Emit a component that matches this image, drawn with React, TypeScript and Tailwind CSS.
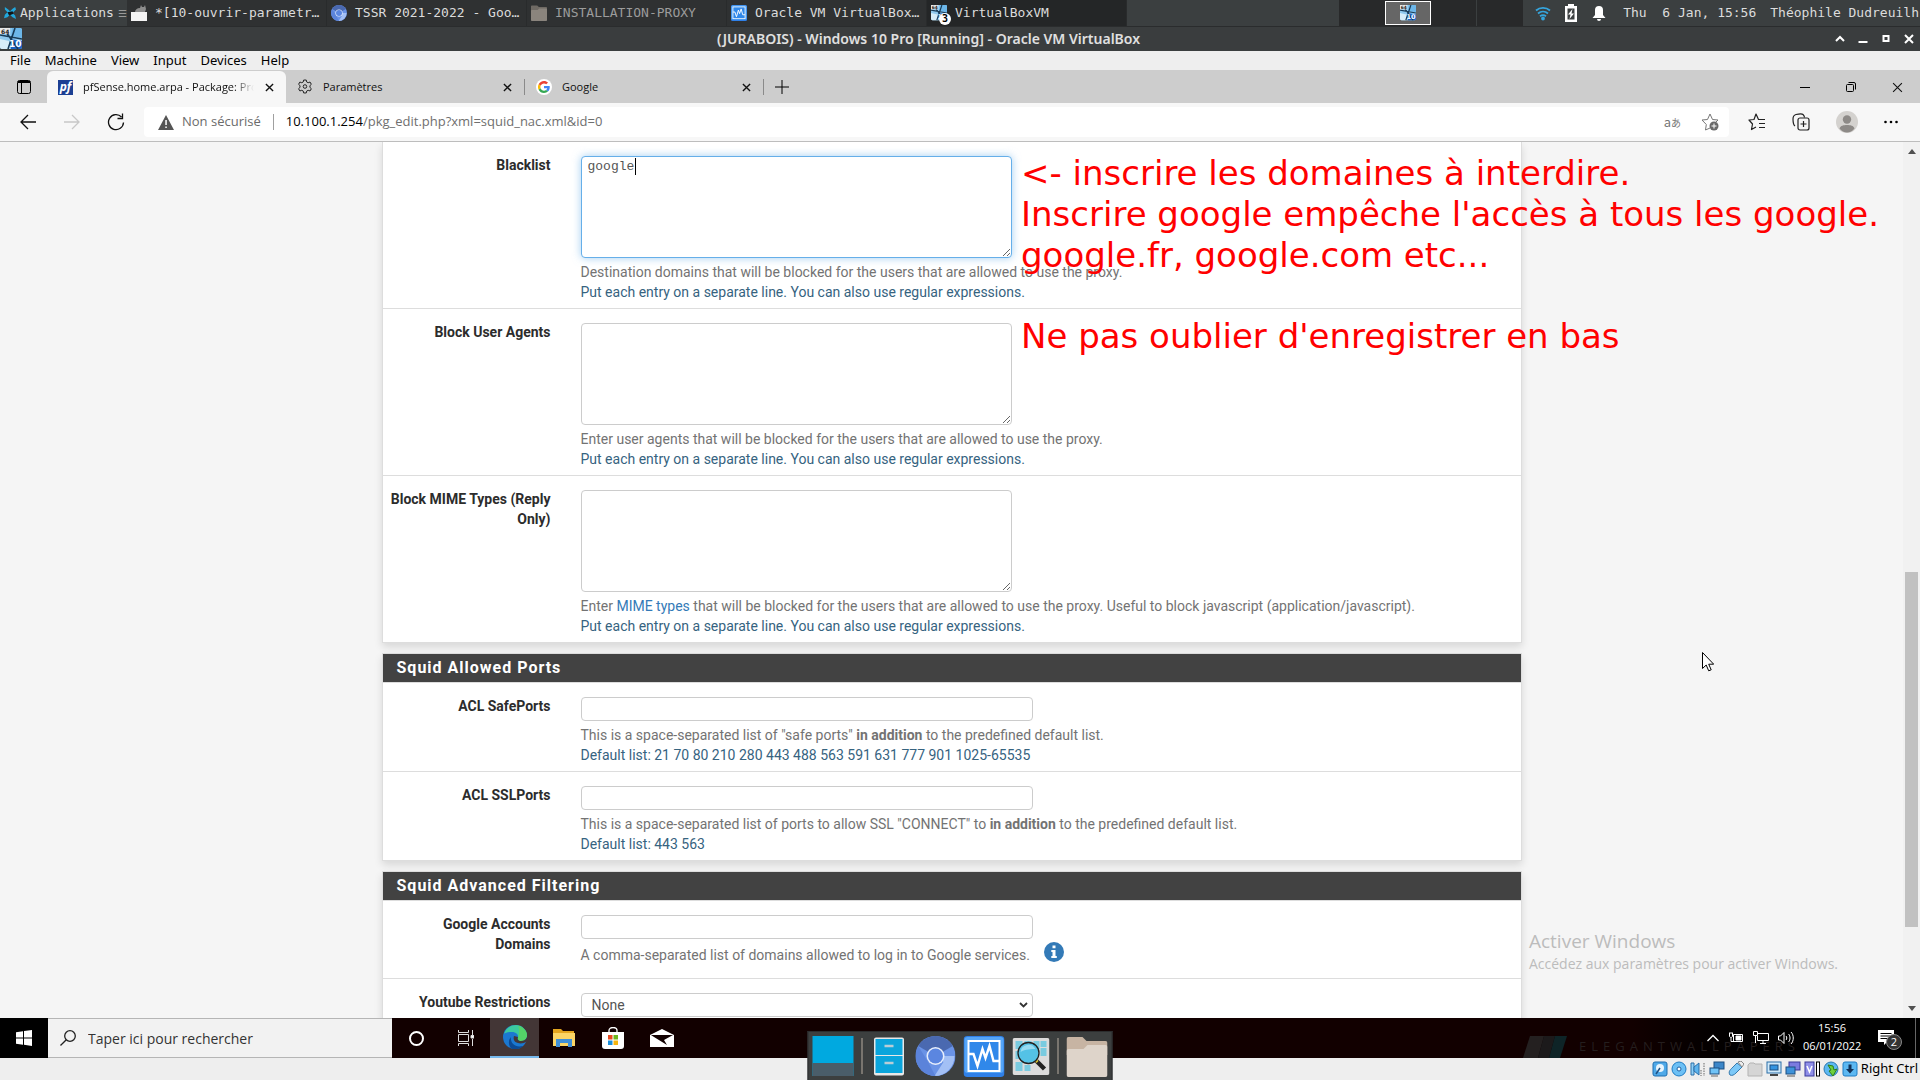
import React from 'react';
import clsx from 'clsx';

type IconProps = { className?: string };

interface RowProps {
  id: string;
  label: string;
  last?: boolean;
  children: React.ReactNode;
}

function Vm64Icon({ className }: IconProps) {
  return (
    <svg className={className} viewBox="0 0 22 22">
      <rect x="0" y="0" width="22" height="21" rx="2" fill="#8fc9ee" />
      <path d="M12 0h8a2 2 0 0 1 2 2v8l-11-2z" fill="#6cb6e8" />
      <path d="M0 11l9 2 1 8H2a2 2 0 0 1-2-2z" fill="#d6edf9" />
      <path d="M10 11l12 2v6a2 2 0 0 1-2 2h-9z" fill="#1b62c4" />
      <path d="M15 0L8 21M0 7l22 4M6 4l12 17" stroke="#173a56" strokeWidth="1.6" fill="none" />
      <rect x="0" y="0" width="10" height="6" fill="#e8e8e8" />
      <text x="1" y="6" fontSize="6" fontWeight="700" fontFamily="DejaVu Sans" fill="#222">64</text>
      <text x="9" y="19" fontSize="9" fontWeight="700" fontFamily="DejaVu Sans" fill="#fff">10</text>
    </svg>
  );
}

function ChromiumIcon({ className }: IconProps) {
  return (
    <svg className={className} viewBox="0 0 40 40">
      <circle cx="20" cy="20" r="20" fill="#6a93e6" />
      <path d="M20 20L2.700 10A20 20 0 0 1 37.300 10z" fill="#4a69b0" />
      <path d="M20 20h19a20 20 0 0 1-20 20l9-14z" fill="#a3c0f5" />
      <path d="M2.700 10L12 25l8 15A20 20 0 0 1 2.700 10z" fill="#5b83da" />
      <circle cx="20" cy="20" r="9" fill="#e8effc" />
      <circle cx="20" cy="20" r="7.500" fill="#5b86e0" />
    </svg>
  );
}

function VirtualBoxIcon({ className }: IconProps) {
  return (
    <svg className={className} viewBox="0 0 41 41">
      <rect width="41" height="41" rx="4" fill="#2f80e8" />
      <rect x="1" y="1" width="39" height="36" rx="3" fill="#55a5f7" />
      <rect x="4" y="4" width="33" height="32" fill="#fff" />
      <rect x="6" y="6" width="29" height="28" fill="#3088ea" />
      <path d="M5 18h5l4 12 5-17 3 9 4-12 4 15h6" fill="none" stroke="#fff" strokeWidth="2.400" />
    </svg>
  );
}

function FolderIcon({ className, dim }: IconProps & { dim?: boolean }) {
  return (
    <svg className={className} viewBox="0 0 41 41">
      <path d="M2 1h14l4 4h19a2 2 0 0 1 2 2v12H0V3a2 2 0 0 1 2-2z" fill={dim ? '#6f6a64' : '#c7b4a3'} />
      <path d="M0 15a2 2 0 0 1 2-2h15l4-4h18a2 2 0 0 1 2 2v28a2 2 0 0 1-2 2H2a2 2 0 0 1-2-2z" fill={dim ? '#8a847d' : '#ded4ca'} />
    </svg>
  );
}

function CloseIcon({ className }: IconProps) {
  return (
    <svg className={className} viewBox="0 0 10 10" stroke="currentColor" fill="none">
      <path d="M1 1l8 8M9 1L1 9" />
    </svg>
  );
}

function GoogleIcon() {
  return (
    <span className="flex h-4 w-4 items-center justify-center rounded-full bg-white">
      <svg className="h-3 w-3" viewBox="0 0 48 48">
        <path fill="#ea4335" d="M24 9.500c3.500 0 6.700 1.200 9.200 3.600l6.900-6.900C35.900 2.400 30.500 0 24 0 14.600 0 6.500 5.400 2.600 13.200l8 6.200C12.400 13.700 17.700 9.500 24 9.500z" />
        <path fill="#4285f4" d="M47 24.500c0-1.600-.2-3.100-.4-4.500H24v9h12.900c-.6 3-2.200 5.500-4.700 7.200l7.700 6C44.400 38 47 31.800 47 24.500z" />
        <path fill="#fbbc05" d="M10.500 28.600a14.500 14.500 0 0 1 0-9.200l-8-6.200a24 24 0 0 0 0 21.600z" />
        <path fill="#34a853" d="M24 48c6.500 0 11.900-2.100 15.900-5.800l-7.700-6c-2.200 1.500-4.900 2.300-8.200 2.300-6.300 0-11.600-4.200-13.500-9.900l-8 6.200C6.500 42.600 14.600 48 24 48z" />
      </svg>
    </span>
  );
}

/* ---------- Host desktop: panel and window title ---------- */

const hostTasks = [
  {
    label: '*[10-ouvrir-parametr…',
    icon: (
      <svg className="h-4 w-4" viewBox="0 0 16 16">
        <path d="M0 7h16v9H0z" fill="#f4f4f4" />
        <path d="M4 7c0-2 2-4 5-4l1-3 1 2h2l1-2 1 4-1 3z" fill="#8d8d8d" />
      </svg>
    ),
  },
  { label: 'TSSR 2021-2022 - Goo…', icon: <ChromiumIcon className="h-4 w-4" /> },
  { label: 'INSTALLATION-PROXY', icon: <FolderIcon className="h-4 w-4" dim />, dim: true },
  { label: 'Oracle VM VirtualBox…', icon: <VirtualBoxIcon className="h-4 w-4" /> },
  {
    label: 'VirtualBoxVM',
    active: true,
    icon: (
      <span className="relative">
        <Vm64Icon className="h-4 w-4" />
        <span className="absolute -right-1 -bottom-1 flex h-3 w-3 items-center justify-center rounded-full bg-white text-[10px] leading-3 font-bold text-black">
          3
        </span>
      </span>
    ),
  },
];

function HostPanel() {
  return (
    <header className="flex h-[27px] shrink-0 items-stretch border-b border-[#2a2c2d] bg-[#3b3f40] font-['DejaVu_Sans_Mono',monospace] text-[13px] text-[#dcdcdc]">
      <button className="flex w-[127px] items-center gap-1 pl-1 text-left">
        <svg className="h-4 w-3 shrink-0" viewBox="0 0 14 16">
          <path d="M1 1l4 3 2 2 3-3 3-2 1 3-4 4 3 3 1 4-4-2-3-3-3 3-4 1 1-4 3-3-3-3z" fill="#22a7dc" />
          <path d="M4 7l6-1 1 3-5 2z" fill="#101416" />
        </svg>
        <span>Applications</span>
        <span className="ml-auto pr-1 text-[10px] text-[#9a9a9a]">☰</span>
      </button>
      <nav className="flex bg-[#2f3132]">
        {hostTasks.map((task) => (
          <button
            key={task.label}
            className={clsx(
              'flex w-[200px] items-center gap-2 border-r border-[#292b2c] pl-1 text-left whitespace-nowrap',
              task.active && 'bg-[#242627]',
              task.dim && 'text-[#9c9c9c]'
            )}
          >
            {task.icon}
            <span>{task.label}</span>
          </button>
        ))}
      </nav>
      <div className="ml-auto flex items-stretch">
        <div className="flex bg-[#28292a]">
          <span className="w-[46px]" />
          <button aria-label="Workspace 2" className="my-px flex w-[46px] items-center justify-center border border-white bg-[#666]">
            <Vm64Icon className="h-4 w-4" />
          </button>
          <span className="w-[46px] border-r border-[#3b3f40]" />
          <span className="w-[46px]" />
        </div>
        <div className="flex items-center gap-3 pr-px pl-3">
          <svg className="h-4 w-4" viewBox="0 0 16 16" fill="none" stroke="#35a5dd" strokeWidth="1.800">
            <path d="M1 5.500c4-3.500 10-3.500 14 0M3 8.500c3-2.600 7-2.600 10 0M5 11.300c2-1.600 4-1.600 6 0" />
            <circle cx="8" cy="13.500" r="1" fill="#35a5dd" />
          </svg>
          <svg className="h-[18px] w-4" viewBox="0 0 16 18">
            <path d="M5 0h6v2h3v16H2V2h3z" fill="#fff" />
            <path d="M4.500 4.500h7v11h-7z" fill="#3b3f40" />
            <path d="M9.500 5L5 10.500h2.500L6.500 15l4.500-5.500H8.500z" fill="#fff" />
          </svg>
          <svg className="h-4 w-4" viewBox="0 0 16 16" fill="#fff">
            <path d="M8 1a4 4 0 0 1 4 4v5l2.500 3h-13L4 10V5a4 4 0 0 1 4-4zM6 14h4a2 2 0 0 1-4 0z" />
          </svg>
          <span className="pr-[2px] pl-1 whitespace-pre">Thu  6 Jan, 15:56</span>
          <span>Théophile Dudreuilh</span>
        </div>
      </div>
    </header>
  );
}

function VmTitleBar() {
  return (
    <div className="flex h-6 shrink-0 items-center bg-[#3a3d3e] text-white">
      <Vm64Icon className="h-[22px] w-[22px]" />
      <h1 className="flex-1 pb-px text-center font-['Noto_Sans',sans-serif] text-[14px] leading-5 font-semibold text-[#e0e0e0]">
        (JURABOIS) - Windows 10 Pro [Running] - Oracle VM VirtualBox
      </h1>
      <div className="flex items-center gap-[13px] pr-[6px]">
        <button aria-label="Shade">
          <svg className="block h-[10px] w-[10px]" viewBox="0 0 10 10" fill="none" stroke="#fff" strokeWidth="2">
            <path d="M1 7l4-4 4 4" />
          </svg>
        </button>
        <button aria-label="Minimize">
          <svg className="block h-[10px] w-[10px]" viewBox="0 0 10 10" fill="#fff">
            <path d="M0.500 7h9v2h-9z" />
          </svg>
        </button>
        <button aria-label="Maximize">
          <svg className="block h-[10px] w-[10px]" viewBox="0 0 10 10" fill="none" stroke="#fff" strokeWidth="2">
            <path d="M2.500 2h5v5h-5z" />
          </svg>
        </button>
        <button aria-label="Close">
          <CloseIcon className="block h-[10px] w-[10px] stroke-2" />
        </button>
      </div>
    </div>
  );
}

function VmMenu() {
  return (
    <nav className="flex h-[19px] shrink-0 items-start gap-[14px] bg-[#eeeeee] pl-[10px] font-['Noto_Sans',sans-serif] text-[13px] leading-[18px] text-black">
      {['File', 'Machine', 'View', 'Input', 'Devices', 'Help'].map((item) => (
        <button key={item}>{item}</button>
      ))}
    </nav>
  );
}

/* ---------- Browser chrome ---------- */

function Tab({ icon, title, active }: { icon: React.ReactNode; title: string; active?: boolean }) {
  return (
    <div
      className={clsx(
        'flex w-[239px] items-center gap-[10px] pl-[11px]',
        active ? 'rounded-t-md bg-[#f7f7f7]' : 'my-2 border-r border-[#8a8a8a]'
      )}
    >
      {icon}
      <span
        className={clsx(
          'w-[171px] overflow-hidden whitespace-nowrap',
          active && 'mask-r-from-88%'
        )}
      >
        {title}
      </span>
      <button aria-label="Fermer l'onglet" className="ml-auto pr-3">
        <CloseIcon className="block h-[9px] w-[9px] stroke-[1.5]" />
      </button>
    </div>
  );
}

function BrowserTabs() {
  return (
    <div className="flex h-[33px] shrink-0 items-stretch bg-[#cdcdcd] pt-px font-['Open_Sans',sans-serif] text-[11px] text-[#111]">
      <button aria-label="Onglets" className="flex w-[47px] items-center justify-center">
        <svg className="h-[14px] w-[14px]" viewBox="0 0 14 14" fill="none" stroke="#000">
          <rect x="0.500" y="0.500" width="13" height="13" rx="2" />
          <path d="M1 2.500h12M1 1.500h12M4.500 3v10" />
        </svg>
      </button>
      <Tab
        active
        title="pfSense.home.arpa - Package: Proxy"
        icon={
          <span className="flex h-[15px] w-[15px] items-center justify-center bg-[#1c3f93] text-[12px] leading-3 font-bold text-white italic">
            pf
          </span>
        }
      />
      <Tab
        title="Paramètres"
        icon={
          <svg className="h-4 w-4" viewBox="0 0 16 16" fill="none" stroke="#222" strokeLinejoin="round">
            <path d="M6.700 1h2.600l.4 1.900 1.500.8 1.900-.7 1.300 2.300-1.400 1.300v1.800l1.400 1.300-1.300 2.300-1.900-.7-1.500.8-.4 1.900H6.700l-.4-1.900-1.500-.8-1.900.7-1.300-2.300L3 8.400V6.600L1.600 5.300 2.900 3l1.900.7 1.500-.8z" />
            <circle cx="8" cy="7.500" r="1.800" />
          </svg>
        }
      />
      <Tab title="Google" icon={<GoogleIcon />} />
      <button aria-label="Nouvel onglet" className="flex w-9 items-center justify-center">
        <svg className="h-[14px] w-[14px]" viewBox="0 0 14 14" stroke="#000">
          <path d="M7 0v14M0 7h14" />
        </svg>
      </button>
      <div className="ml-auto flex items-center">
        <button aria-label="Réduire" className="flex w-[46px] justify-center">
          <svg className="h-[10px] w-[10px]" viewBox="0 0 10 10" stroke="#000"><path d="M0 5.500h10" /></svg>
        </button>
        <button aria-label="Restaurer" className="flex w-[46px] justify-center">
          <svg className="h-[10px] w-[10px]" viewBox="0 0 10 10" fill="none" stroke="#000">
            <rect x="0.500" y="2.500" width="7" height="7" rx="1" />
            <path d="M2.500.5H8A1.500 1.500 0 0 1 9.500 2v5.500" />
          </svg>
        </button>
        <button aria-label="Fermer" className="flex w-[46px] justify-center">
          <CloseIcon className="h-[11px] w-[11px]" />
        </button>
      </div>
    </div>
  );
}

function BrowserToolbar() {
  return (
    <div className="flex h-[39px] shrink-0 items-center border-b border-[#bdbdbd] bg-[#f7f7f7] pl-[6px] font-['Open_Sans',sans-serif] text-[13px]">
      <button aria-label="Retour" className="flex w-[44px] justify-center">
        <svg className="h-4 w-4" viewBox="0 0 16 16" fill="none" stroke="#111" strokeWidth="1.300">
          <path d="M16 8H1M8 1L1 8l7 7" />
        </svg>
      </button>
      <button aria-label="Avancer" className="flex w-[44px] justify-center">
        <svg className="h-4 w-4" viewBox="0 0 16 16" fill="none" stroke="#c8c8c8" strokeWidth="1.300">
          <path d="M0 8h15M8 1l7 7-7 7" />
        </svg>
      </button>
      <button aria-label="Actualiser" className="flex w-[44px] justify-center">
        <svg className="h-[18px] w-[18px]" viewBox="0 0 18 18" fill="none" stroke="#111" strokeWidth="1.300">
          <path d="M16.500 9.500A7.500 7.500 0 1 1 14.500 4M15.500 0.500v5h-5" />
        </svg>
      </button>
      <div className="ml-[6px] flex h-[30px] flex-1 items-center rounded bg-white pr-[10px] pl-[14px]">
        <svg className="mr-2 h-[15px] w-4 shrink-0" viewBox="0 0 16 15">
          <path d="M8 0l8 15H0z" fill="#555" />
          <path d="M7.300 5h1.500v5H7.300zM7.300 11.500h1.500v1.500H7.300z" fill="#fff" />
        </svg>
        <span className="text-[#6b6b6b]">Non sécurisé</span>
        <span className="mx-3 h-4 w-px bg-[#a0a0a0]" />
        <span className="flex-1 text-[#6f6f6f]">
          <span className="text-black">10.100.1.254</span>/pkg_edit.php?xml=squid_nac.xml&amp;id=0
        </span>
        <button aria-label="Traduire" className="mr-5 font-['Noto_Sans_CJK_JP',sans-serif] text-[13px] leading-4 text-[#777]">
          a<span className="text-[10px]">あ</span>
        </button>
        <button aria-label="Ajouter aux favoris">
          <svg className="block h-[18px] w-[18px]" viewBox="0 0 18 18" fill="none" stroke="#777" strokeLinejoin="round">
            <path d="M9 15l-4.500 2 .8-5.500L1 7l5.500-.5L9 1l2.500 5.500L17 7l-2 2" />
            <circle cx="13" cy="13" r="4.500" fill="#6a6a6a" stroke="none" />
            <path d="M13 10.500v5M10.500 13h5" stroke="#fff" />
          </svg>
        </button>
      </div>
      <div className="flex items-center gap-[26px] pr-[22px] pl-[19px]">
        <button aria-label="Favoris">
          <svg className="block h-[18px] w-[18px]" viewBox="0 0 18 18" fill="none" stroke="#222" strokeLinejoin="round" strokeWidth="1.200">
            <path d="M8 14l-4.500 2.500 1-5.500L1 7l5-.5L8 1l2.500 5.500M10 6.500h7M11 10.500h6M11 14.500h6" />
          </svg>
        </button>
        <button aria-label="Collections">
          <svg className="block h-[18px] w-[18px]" viewBox="0 0 18 18" fill="none" stroke="#222" strokeWidth="1.200">
            <rect x="6" y="5" width="11" height="12" rx="2" />
            <path d="M3 13C1.500 12 1 9 1 6s1-4 3-4.500 6-1 7 0 1.500 1.500 1.500 3M11.500 8v6M8.500 11h6" />
          </svg>
        </button>
        <button aria-label="Profil">
          <svg className="block h-[22px] w-[22px]" viewBox="0 0 22 22">
            <circle cx="11" cy="11" r="11" fill="#d4d2cf" />
            <circle cx="11" cy="8.500" r="4.200" fill="#8d8a87" />
            <path d="M3.500 17.500c1-3 4-3.500 7.500-3.500s6.500.5 7.500 3.500C16.500 20 14 21.500 11 21.500S5.500 20 3.500 17.500z" fill="#8d8a87" />
          </svg>
        </button>
        <button aria-label="Plus">
          <svg className="block h-[14px] w-[14px]" viewBox="0 0 14 14">
            <circle cx="1.500" cy="7" r="1.300" /><circle cx="7" cy="7" r="1.300" /><circle cx="12.500" cy="7" r="1.300" />
          </svg>
        </button>
      </div>
    </div>
  );
}

/* ---------- pfSense form ---------- */

function Row({ id, label, last, children }: RowProps) {
  return (
    <div className={clsx('grid grid-cols-[183px_1fr] pt-[14px] pb-[6px]', !last && 'border-b border-[#dddddd]')}>
      <label htmlFor={id} className="-mt-px pr-[15px] pl-1 text-right font-bold text-[#2c2c2c]">
        {label}
      </label>
      <div className="pl-[15px]">{children}</div>
    </div>
  );
}

function Help({ children, note }: { children: React.ReactNode; note?: string }) {
  return (
    <p className="mt-1 text-[#737373]">
      {children}
      {note && <span className="block text-[#36637f]">{note}</span>}
    </p>
  );
}

function Area({ id, focused, value }: { id: string; focused?: boolean; value?: string }) {
  return (
    <div className="relative w-[431px]">
      <textarea
        id={id}
        defaultValue={value}
        className={clsx(
          "block h-[102px] w-full rounded border bg-white px-[6px] py-px font-['Liberation_Mono',monospace] text-[13px] leading-[18px] text-[#555] outline-none",
          focused ? 'border-[#66afe9] shadow-[0_0_8px_rgba(102,175,233,0.6)]' : 'border-[#cccccc]'
        )}
      />
      {focused && <span className="absolute top-[2px] left-[54px] h-[17px] w-px bg-black" />}
    </div>
  );
}

function TextField({ id }: { id: string }) {
  return <input id={id} type="text" className="block h-6 w-[452px] rounded border border-[#cccccc] bg-white px-2" />;
}

function Panel({ title, children }: { title?: string; children: React.ReactNode }) {
  return (
    <section
      className={clsx(
        'mb-[10px] border border-[#dddddd] bg-white shadow-[0_4px_8px_rgba(0,0,0,0.12)]',
        !title && 'border-t-0'
      )}
    >
      {title && (
        <h2 className="h-[29px] border-b border-[#dddddd] bg-[#424242] pl-[14px] text-[16px] leading-[28px] font-bold tracking-[1px] text-white">
          {title}
        </h2>
      )}
      {children}
    </section>
  );
}

const separateLine = 'Put each entry on a separate line. You can also use regular expressions.';

function PfSensePage() {
  return (
    <main className="mx-auto w-full max-w-[1140px] font-[Roboto,sans-serif] text-[14px] leading-5">
      <Panel>
        <Row id="blacklist" label="Blacklist">
          <Area id="blacklist" value="google" focused />
          <Help note={separateLine}>
            Destination domains that will be blocked for the users that are allowed to use the proxy.
          </Help>
        </Row>
        <Row id="agents" label="Block User Agents">
          <Area id="agents" />
          <Help note={separateLine}>Enter user agents that will be blocked for the users that are allowed to use the proxy.</Help>
        </Row>
        <Row id="mime" label="Block MIME Types (Reply Only)" last>
          <Area id="mime" />
          <Help note={separateLine}>
            Enter <a href="#mime" className="text-[#337ab7]">MIME types</a> that will be blocked for the users that are
            allowed to use the proxy. Useful to block javascript (application/javascript).
          </Help>
        </Row>
      </Panel>

      <Panel title="Squid Allowed Ports">
        <Row id="safeports" label="ACL SafePorts">
          <TextField id="safeports" />
          <Help note="Default list: 21 70 80 210 280 443 488 563 591 631 777 901 1025-65535">
            This is a space-separated list of "safe ports" <b>in addition</b> to the predefined default list.
          </Help>
        </Row>
        <Row id="sslports" label="ACL SSLPorts" last>
          <TextField id="sslports" />
          <Help note="Default list: 443 563">
            This is a space-separated list of ports to allow SSL "CONNECT" to <b>in addition</b> to the predefined default
            list.
          </Help>
        </Row>
      </Panel>

      <Panel title="Squid Advanced Filtering">
        <Row id="accounts" label="Google Accounts Domains">
          <TextField id="accounts" />
          <div className="flex h-[33px] items-start gap-[14px] pt-[3px] text-[#737373]">
            <span className="pt-[3px]">A comma-separated list of domains allowed to log in to Google services.</span>
            <button aria-label="Info">
              <svg className="block h-5 w-5" viewBox="0 0 20 20">
                <circle cx="10" cy="10" r="10" fill="#337ab7" />
                <path d="M8.500 3.500h3v2.700h-3zM7.300 8h4.200v6h1.300v2H7.300v-2h1.200v-4H7.300z" fill="#fff" />
              </svg>
            </button>
          </div>
        </Row>
        <Row id="youtube" label="Youtube Restrictions" last>
          <div className="relative w-[452px]">
            <select id="youtube" className="block h-6 w-full appearance-none rounded border border-[#cccccc] bg-white pl-[10px] text-[#555]">
              <option>None</option>
            </select>
            <svg className="pointer-events-none absolute top-[9px] right-[5px] h-[6px] w-[9px]" viewBox="0 0 9 6" fill="none" stroke="#333" strokeWidth="1.800">
              <path d="M1 1l3.500 3.500L8 1" />
            </svg>
          </div>
        </Row>
      </Panel>
    </main>
  );
}

function Scrollbar() {
  return (
    <div className="flex w-[17px] shrink-0 flex-col items-center justify-between bg-[#f1f1f1] py-[7px]">
      <svg className="h-[5px] w-[8px]" viewBox="0 0 8 5" fill="#505050"><path d="M4 0l4 5H0z" /></svg>
      <div className="flex w-[13px] flex-1 flex-col">
        <span className="grow-[418]" />
        <span className="grow-[355] bg-[#c1c1c1]" />
        <span className="grow-[79]" />
      </div>
      <svg className="h-[5px] w-[8px]" viewBox="0 0 8 5" fill="#505050"><path d="M0 0h8L4 5z" /></svg>
    </div>
  );
}

/* ---------- Guest taskbar ---------- */

function Taskbar() {
  return (
    <footer className="relative flex h-10 shrink-0 items-stretch bg-linear-to-r from-[#120000] from-85% to-black to-95% font-['Open_Sans',sans-serif] text-white">
      <button aria-label="Démarrer" className="flex w-12 items-center justify-center bg-black">
        <svg className="h-4 w-4" viewBox="0 0 16 16" fill="#fff">
          <path d="M0 2.200L7 1.200v6.300H0zM8 1l8-1v7.500H8zM0 8.500h7v6.300l-7-1zM8 8.500h8V16l-8-1.200z" />
        </svg>
      </button>
      <label className="flex w-[344px] items-center gap-3 border-y border-[#b5b5b5] bg-[#f2f2f2] pl-3">
        <svg className="h-4 w-4" viewBox="0 0 16 16" fill="none" stroke="#222" strokeWidth="1.300">
          <circle cx="10" cy="6" r="5.300" />
          <path d="M6.300 9.700L0.500 15.500" />
        </svg>
        <input
          type="text"
          placeholder="Taper ici pour rechercher"
          className="w-64 bg-transparent text-[14px] outline-none placeholder:text-[#333]"
        />
      </label>
      <button aria-label="Cortana" className="flex w-[49px] items-center justify-center">
        <span className="h-[15px] w-[15px] rounded-full border-2 border-white" />
      </button>
      <button aria-label="Vue des tâches" className="flex w-[49px] items-center justify-center">
        <svg className="h-4 w-4" viewBox="0 0 16 16" fill="none" stroke="#ddd">
          <path d="M0.500 4.500h10v7h-10zM0.500 0v2.500h10V0M0.500 16v-2.500h10V16M14.500 0v5M14.500 9v7" />
          <path d="M13 5.500h3v2.500h-3z" fill="#fff" />
        </svg>
      </button>
      <button aria-label="Edge" className="flex w-[49px] items-center justify-center border-b-2 border-[#76b9ed] bg-[#433636]">
        <svg className="h-6 w-6" viewBox="0 0 24 24">
          <circle cx="12" cy="12" r="12" fill="#1b78d0" />
          <path d="M1 9C3 2 9 0 13 0c6 0 11 5 11 10 0 4-3 6-6 6-2 0-4-1-3-3 1-4-3-6-6-6-4 0-7 1-8 2z" fill="#3bc9a0" />
          <path d="M15 1c5 1 9 5 9 9 0 4-3 6-6 6-2 0-4-1-3-3 1-3 2-8 0-12z" fill="#5bd65a" opacity=".8" />
          <path d="M9 24C5 21 5 15 8 12c-1 6 4 11 12 9-3 3-7 4-11 3z" fill="#0c4a94" />
          <path d="M11 11c-1 3 0 6 4 7 3 1 6 0 8-1l1-1V12c-1 3-4 4-6 4-3 0-4-2-3-4z" fill="#433636" />
        </svg>
      </button>
      <button aria-label="Explorateur" className="flex w-[49px] items-center justify-center">
        <svg className="h-[18px] w-[22px]" viewBox="0 0 22 18">
          <path d="M0 0h8l2 2h11v15H0z" fill="#e3a51f" />
          <path d="M0 4h22v13H0z" fill="#fbd565" />
          <path d="M3 10h16v8h-4v-4H7v4H3z" fill="#3f8fd6" />
        </svg>
      </button>
      <button aria-label="Store" className="flex w-[49px] items-center justify-center">
        <svg className="h-[22px] w-[22px]" viewBox="0 0 22 22">
          <path d="M7 6V3.500C7 1.500 9 0.500 11 0.500s4 1 4 3V6" fill="none" stroke="#fff" strokeWidth="1.300" />
          <path d="M0 5h22v14a3 3 0 0 1-3 3H3a3 3 0 0 1-3-3z" fill="#fff" />
          <path d="M6 8h4.500v4.500H6z" fill="#e8491f" /><path d="M11.500 8H16v4.500h-4.500z" fill="#6fb61e" />
          <path d="M6 13.500h4.500V18H6z" fill="#1b8fdc" /><path d="M11.500 13.500H16V18h-4.500z" fill="#f6b40e" />
        </svg>
      </button>
      <button aria-label="Courrier" className="flex w-[49px] items-center justify-center">
        <svg className="h-[18px] w-6" viewBox="0 0 24 18">
          <path d="M0 6l12-6 12 6v12H0z" fill="#fff" />
          <path d="M1 6h22l-9 5 3 5L4 8z" fill="#120000" />
        </svg>
      </button>

      <div className="absolute right-[120px] bottom-0 flex h-[22px] items-center gap-3 text-[13px] tracking-[5px] text-[#241e1e]" aria-hidden>
        <svg className="h-[22px] w-11" viewBox="0 0 44 22">
          <path d="M7 0h14l-6 22H0z" fill="#242020" />
          <path d="M21 0h11l-6 22H15z" fill="#1c1a1b" />
          <path d="M32 0h12l-7 22H26z" fill="#0e2427" />
        </svg>
        ELEGANTWALLPAPERS
      </div>

      <div className="relative ml-auto flex items-center gap-[9px] pr-1">
        <svg className="h-2 w-3" viewBox="0 0 12 8" fill="none" stroke="#fff" strokeWidth="1.300"><path d="M0.500 7L6 1.500 11.500 7" /></svg>
        <svg className="h-4 w-4" viewBox="0 0 16 16" fill="none" stroke="#fff">
          <path d="M5.500 4.500h9v7h-9zM1 3h4M1.500 3v3c0 2 3 2 3 0V3M3 8v3.500h3" />
          <path d="M8 6h5v4H8z" fill="#fff" />
        </svg>
        <svg className="h-4 w-4" viewBox="0 0 16 16" fill="none" stroke="#fff">
          <path d="M5 3.500h10.500v7H4.500V6M7 13.500h6M10 11v2.500M0.500 1.500h4v4h-4zM2.500 6v7" />
        </svg>
        <svg className="h-4 w-4" viewBox="0 0 16 16" fill="none" stroke="#fff">
          <path d="M0.500 6h2L6 2.500v11L2.500 10h-2zM8 6c1 1 1 3 0 4M10.500 4c2 2 2 6 0 8M13 2c3 3 3 9 0 12" />
        </svg>
        <div className="w-[58px] pb-[2px] text-center text-[11px] leading-[18px]">
          <div>15:56</div>
          <div>06/01/2022</div>
        </div>
        <button aria-label="Notifications" className="relative mr-1 ml-2 block h-6 w-6">
          <svg className="h-[18px] w-4" viewBox="0 0 16 16">
            <path d="M0 0h16v12H9l-3 3v-3H0z" fill="#fff" />
            <path d="M2.500 3.500h11M2.500 6h11M2.500 8.500h7" stroke="#000" />
          </svg>
          <span className="absolute top-2 right-0 flex h-4 w-4 items-center justify-center rounded-full border border-[#888] bg-[#333] text-[11px] leading-3">
            2
          </span>
        </button>
        <span className="h-10 w-px bg-[#666]" />
      </div>
    </footer>
  );
}

/* ---------- VirtualBox status bar and dock ---------- */

const statusIcons = [
  <><rect x="1" y="1" width="14" height="14" rx="2" fill="#4fa9e8" stroke="#1f6fb0" /><circle cx="8" cy="7" r="4" fill="#e8f5fd" /><path d="M4 13l4-6" stroke="#1f4f80" strokeWidth="1.500" /></>,
  <><circle cx="8" cy="8" r="7" fill="#6cc0f5" stroke="#1f7cc4" /><circle cx="8" cy="8" r="2" fill="#fff" stroke="#1f5fa0" /></>,
  <><path d="M1 2h3v12H1z" fill="#8fd0f7" stroke="#2a6fa8" /><path d="M4 6l5-4v12L4 10z" fill="#5db4ee" stroke="#2a6fa8" /><path d="M11 9v6M14 2v13" stroke="#aaa" strokeWidth="2" strokeDasharray="1.500 1" /></>,
  <><rect x="5" y="1" width="10" height="7" fill="#3b86c8" stroke="#1d4f80" /><rect x="1" y="7" width="9" height="6" fill="#6fc3f7" stroke="#1d4f80" /><path d="M2 15h7" stroke="#666" /></>,
  <><path d="M2 14c-2-3 0-5 2-7l5-5 5 4-6 6c-2 2-4 3-6 2z" fill="#7cc8f7" stroke="#3579ad" /><path d="M10 1l3-1 3 3-2 3z" fill="#eee" stroke="#888" /></>,
  <path d="M1 4l2-2h4l1 1h7v12H1z" fill="#d5d5d5" stroke="#b3b3b3" />,
  <><rect x="1" y="1" width="14" height="11" fill="#cfe9fa" stroke="#2a6fa8" /><rect x="4" y="4" width="8" height="5" fill="#3494e0" stroke="#1d4f80" /><path d="M4 14h8" stroke="#444" strokeWidth="2" /></>,
  <><rect x="4" y="1" width="11" height="8" fill="#7b7be0" stroke="#3a3a9a" /><rect x="1" y="6" width="9" height="7" fill="#3f93da" stroke="#1d4f80" /><path d="M2 15h8" stroke="#555" /></>,
  <><rect x="1" y="1" width="9" height="14" fill="#8f8fe8" stroke="#3b3b9c" /><path d="M3 5l2.500 6L8 5" fill="none" stroke="#fff" strokeWidth="1.500" /><rect x="12.500" y="1" width="3" height="14" fill="#fff" stroke="#000" /></>,
  <><circle cx="8" cy="8" r="7" fill="#5cb8f2" stroke="#2a78b0" /><path d="M5 4l5 1 1 4 3-1-4 7-4-5 2-1z" fill="#6ed13c" stroke="#2e7d1a" /></>,
  <><rect x="1" y="1" width="14" height="14" rx="2" fill="#5cb8f2" stroke="#1f7cc4" /><path d="M6.500 3.500h3V8H12l-4 4.500L4 8h2.500z" fill="#12335a" /></>,
];

function StatusBar() {
  return (
    <div className="flex h-[22px] shrink-0 items-center justify-end gap-[3px] bg-[#eeeeee] pr-[2px] font-['Noto_Sans',sans-serif] text-[13px] text-black">
      {statusIcons.map((shape, i) => (
        <svg key={i} className="h-4 w-4" viewBox="0 0 16 16">{shape}</svg>
      ))}
      <span>Right Ctrl</span>
    </div>
  );
}

function Dock() {
  return (
    <nav className="absolute bottom-0 left-1/2 flex h-[49px] -translate-x-1/2 items-center gap-2 border border-b-0 border-[#2b2d2e] bg-[#3c3f3f] px-1">
      <button aria-label="Bureau" className="h-10 w-[41px] border-b-[13px] border-[#4a5d69] bg-[#00a9e0]" />
      <span className="h-9 w-px bg-[#b5aba0]" />
      <button aria-label="Fichiers" className="mx-[3px]">
        <svg className="block h-[39px] w-[31px]" viewBox="0 0 31 39">
          <rect x="0.500" y="0.500" width="30" height="38" rx="2" fill="#e8e8e8" />
          <path d="M2 2h27v16H2zM2 19h27v17H2z" fill="#0aa5dc" />
          <path d="M11 9h9M11 26h9" stroke="#b9cdd6" strokeWidth="2.500" />
        </svg>
      </button>
      <button aria-label="Chromium"><ChromiumIcon className="block h-10 w-10" /></button>
      <button aria-label="VirtualBox"><VirtualBoxIcon className="block h-[41px] w-[41px]" /></button>
      <button aria-label="Loupe">
        <svg className="block h-[37px] w-[37px]" viewBox="0 0 37 37">
          <rect width="37" height="37" rx="2" fill="#dcdcdc" />
          <path d="M3 3h7v8H3zM12 3h7v8h-7zM21 3h6v8h-6zM28 3h6v6h-6zM28 10h6v8h-6zM3 13h5v8H3zM3 24h7v9H3zM12 27h6v6h-6z" fill="#79cbe0" />
          <path d="M24 23l8 8" stroke="#222" strokeWidth="4.500" />
          <path d="M22 21l3 3" stroke="#d9c22e" strokeWidth="3" />
          <circle cx="16" cy="15" r="10.500" fill="#54c2e6" stroke="#222" strokeWidth="1.300" />
          <path d="M8 14a8 8 0 0 1 15-3c-4 0-10 0-15 3z" fill="#b4e6f5" opacity=".7" />
        </svg>
      </button>
      <span className="h-9 w-px bg-[#b5aba0]" />
      <button aria-label="Dossier"><FolderIcon className="block h-[41px] w-[41px]" /></button>
    </nav>
  );
}

export default function App() {
  return (
    <div className="relative flex h-screen flex-col overflow-hidden">
      <HostPanel />
      <VmTitleBar />
      <VmMenu />
      <BrowserTabs />
      <BrowserToolbar />

      <div className="relative flex min-h-0 flex-1 bg-[#f5f5f5]">
        <div className="min-w-0 flex-1 overflow-hidden">
          <PfSensePage />
        </div>
        <Scrollbar />

        {/* notes written over the page */}
        <div className="absolute top-[11px] left-[1021px] font-['DejaVu_Sans',sans-serif] text-[34px] leading-[41px] whitespace-nowrap text-[#ff0000]">
          <p>&lt;- inscrire les domaines à interdire.</p>
          <p>Inscrire google empêche l'accès à tous les google.</p>
          <p>google.fr, google.com etc...</p>
          <p className="mt-10">Ne pas oublier d'enregistrer en bas</p>
        </div>

        <div className="absolute right-[82px] bottom-[43px] font-['Open_Sans',sans-serif] text-[#bcbcbc]">
          <p className="text-[19px] leading-6">Activer Windows</p>
          <p className="text-[14px] leading-[22px]">Accédez aux paramètres pour activer Windows.</p>
        </div>

        <svg className="absolute top-[510px] right-[206px] h-5 w-[12px]" viewBox="0 0 12 20" fill="#fff" stroke="#000">
          <path d="M0.500 0.500v16l3.700-3.500 2.500 5.800 2.500-1-2.500-5.600h5z" />
        </svg>
      </div>

      <Taskbar />
      <StatusBar />
      <Dock />
    </div>
  );
}
